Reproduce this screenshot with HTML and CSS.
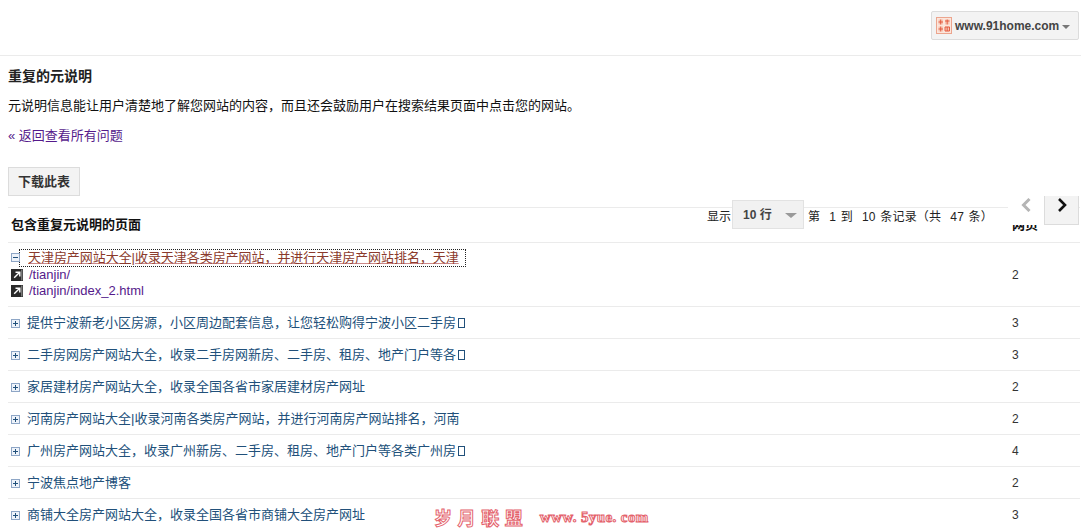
FILE: index.html
```html
<!DOCTYPE html>
<html lang="zh-CN">
<head>
<meta charset="utf-8">
<title>重复的元说明</title>
<link rel="stylesheet" href="styles.css">
</head>
<body>
<header class="topbar">
  <div class="site-picker">
    <svg class="site-icon" width="16" height="17" viewBox="0 0 16 17">
      <rect x="0.5" y="0.5" width="15" height="16" fill="#fbe6dc" stroke="#eca58e"/>
      <path d="M2.5 2.5h4.5v5H2.5zM9 2.5h4.5v5H9zM2.5 9.5h4.5v5H2.5zM9 9.5h4.5v5H9z" fill="#f7c4b2"/>
      <path d="M4.7 2.5v5M2.5 5h4.5M11.2 2.5v5M9 4h4.5M2.5 12h4.5M4.7 9.5v5M9 10h4.5v4H9zM11.2 10v4" fill="none" stroke="#e2553a" stroke-width="0.9"/>
    </svg>
    <span class="site-name">www.91home.com</span>
    <span class="caret"></span>
  </div>
</header>

<main class="content">
  <h1 class="title">重复的元说明</h1>
  <p class="desc">元说明信息能让用户清楚地了解您网站的内容，而且还会鼓励用户在搜索结果页面中点击您的网站。</p>
  <p class="back"><a href="#">« 返回查看所有问题</a></p>
  <div class="actions"><button class="btn">下载此表</button></div>
</main>

<section class="table-wrap">
  <div class="pager">
    <span class="pager-label">显示</span>
    <span class="page-size"><b>10 行</b><i class="caret caret-big"></i></span>
    <span class="pager-info">第&nbsp;&nbsp;1 到&nbsp;&nbsp;10 条记录（共&nbsp;&nbsp;47 条）</span>
    <span class="page-buttons">
      <button class="nav nav-prev"><svg width="12" height="14" viewBox="0 0 12 14"><path d="M9.5 1 3.5 7l6 6" fill="none" stroke="#b5b5b5" stroke-width="3"/></svg></button>
      <button class="nav nav-next"><svg width="12" height="14" viewBox="0 0 12 14"><path d="M3 1l6 6-6 6" fill="none" stroke="#111" stroke-width="2.6"/></svg></button>
    </span>
  </div>
  <table class="issues">
    <thead>
      <tr><th class="col-page">包含重复元说明的页面</th><th class="col-count">网页</th></tr>
    </thead>
    <tbody>
      <tr class="open">
        <td>
          <div class="line line-first">
            <span class="toggle minus"></span>
            <a class="row-link focused" href="#">天津房产网站大全|收录天津各类房产网站，并进行天津房产网站排名，天津</a>
          </div>
          <div class="line sub"><svg class="ext" width="12" height="12" viewBox="0 0 12 12"><rect width="12" height="12" fill="#2a2a2a"/><rect x="10" y="0.5" width="1.5" height="11" fill="#777"/><path d="M3.2 8.8 8 4M4.5 3.2h4.3v4.3" stroke="#fff" stroke-width="1.4" fill="none"/></svg><a class="visited" href="#">/tianjin/</a></div>
          <div class="line sub"><svg class="ext" width="12" height="12" viewBox="0 0 12 12"><rect width="12" height="12" fill="#2a2a2a"/><rect x="10" y="0.5" width="1.5" height="11" fill="#777"/><path d="M3.2 8.8 8 4M4.5 3.2h4.3v4.3" stroke="#fff" stroke-width="1.4" fill="none"/></svg><a class="visited" href="#">/tianjin/index_2.html</a></div>
        </td>
        <td class="count">2</td>
      </tr>
      <tr><td><span class="toggle"></span><a class="row-link" href="#">提供宁波新老小区房源，小区周边配套信息，让您轻松购得宁波小区二手房<i class="tofu"></i></a></td><td class="count">3</td></tr>
      <tr><td><span class="toggle"></span><a class="row-link" href="#">二手房网房产网站大全，收录二手房网新房、二手房、租房、地产门户等各<i class="tofu"></i></a></td><td class="count">3</td></tr>
      <tr><td><span class="toggle"></span><a class="row-link" href="#">家居建材房产网站大全，收录全国各省市家居建材房产网址</a></td><td class="count">2</td></tr>
      <tr><td><span class="toggle"></span><a class="row-link" href="#">河南房产网站大全|收录河南各类房产网站，并进行河南房产网站排名，河南</a></td><td class="count">2</td></tr>
      <tr><td><span class="toggle"></span><a class="row-link" href="#">广州房产网站大全，收录广州新房、二手房、租房、地产门户等各类广州房<i class="tofu"></i></a></td><td class="count">4</td></tr>
      <tr><td><span class="toggle"></span><a class="row-link" href="#">宁波焦点地产博客</a></td><td class="count">2</td></tr>
      <tr><td><span class="toggle"></span><a class="row-link" href="#">商铺大全房产网站大全，收录全国各省市商铺大全房产网址</a></td><td class="count">3</td></tr>
    </tbody>
  </table>
</section>

<div class="watermark"><span class="wm-cn">岁 月 联 盟</span><span class="wm-en">www. 5yue. com</span></div>
</body>
</html>
```

FILE: styles.css
```css
* { box-sizing: border-box; }
html, body { margin: 0; padding: 0; }
body {
  position: relative;
  height: 528px;
  overflow: hidden;
  background: #fff;
  color: #000;
  font: 13px/16px "Liberation Sans", "Noto Sans CJK SC", sans-serif;
}
a { text-decoration: none; }

.topbar {
  height: 56px;
  display: flex;
  justify-content: flex-end;
  align-items: flex-start;
  padding: 11px 2px 0 0;
  border-bottom: 1px solid #ebebeb;
}
.site-picker {
  width: 148px;
  height: 29px;
  display: flex;
  align-items: center;
  padding-left: 4px;
  background: #f3f3f3;
  border: 1px solid #dcdcdc;
  border-radius: 2px;
}
.site-icon { flex: none; margin-right: 3px; }
.site-name { font-size: 12px; font-weight: bold; color: #444; white-space: nowrap; }
.caret {
  display: inline-block;
  margin: 2px 0 0 3px;
  border: 4px solid transparent;
  border-top-color: #777;
  border-bottom: 0;
}
.content { padding: 0 8px; }
.title { margin: 11px 0 0; font-size: 14px; line-height: 18px; font-weight: bold; color: #222; }
.desc { margin: 13px 0 0; font-size: 13px; line-height: 16px; color: #111; }
.back { margin: 14px 0 0; line-height: 16px; }
.back a { color: #551a8b; }
.actions { margin-top: 23px; }
.btn {
  width: 72px;
  height: 29px;
  padding: 0;
  background: #f3f3f3;
  border: 1px solid #dcdcdc;
  color: #333;
  font: bold 13px/16px "Liberation Sans", "Noto Sans CJK SC", sans-serif;
}

.table-wrap { position: relative; margin: 11px 1px 0 8px; }
.pager {
  position: absolute;
  top: -11px;
  right: 0;
  left: 699px;
  height: 36px;
  display: flex;
  align-items: flex-start;
  z-index: 2;
  font-size: 12px;
}
.pager-label { margin-top: 13px; color: #222; }
.page-size {
  width: 72px;
  height: 29px;
  margin: 4px 4px 0 1px;
  padding: 0 0 0 10px;
  display: flex;
  align-items: center;
  justify-content: space-between;
  background: #f1f1f1;
  border: 1px solid #e2e2e2;
  color: #444;
}
.page-size b { font-size: 12px; }
.caret-big { margin: 1px 6px 0 0; border-width: 5px 6px 0; border-top-color: #999; }
.pager-info { margin: 13px 0 0 0; color: #222; word-spacing: 1px; letter-spacing: 0.2px; white-space: nowrap; }
.page-buttons { position: absolute; top: 0; right: 1px; display: flex; background: #fff; }
.nav { width: 36px; height: 29px; padding: 0; background: #fff; border: 0; display: flex; align-items: center; justify-content: center; }
.nav-next { width: 35px; background: #f3f3f3; border: 1px solid #dcdcdc; border-top: 0; }
.nav svg { display: block; margin-top: -11px; }

.issues { width: 100%; border-collapse: collapse; table-layout: fixed; }
.issues th, .issues td { padding: 0 0 0 3px; text-align: left; border-bottom: 1px solid #ebebeb; }
.issues thead th { height: 35px; border-top: 1px solid #ebebeb; font-size: 13px; color: #111; }
.col-page { width: 1001px; }
.issues thead .col-count { vertical-align: top; padding-top: 9px; }
.issues tbody tr { height: 32px; }
.issues tbody tr.open { height: 64px; }
.issues td { vertical-align: middle; white-space: nowrap; }
.count { color: #333; font-size: 12px; }
.row-link { color: #21507a; }
.line { display: flex; align-items: center; height: 16px; }
.line-first { height: 17px; align-items: flex-start; }
.line-first .toggle { margin-top: 3px; }
.toggle {
  display: inline-block;
  position: relative;
  width: 9px;
  height: 9px;
  margin: 0 7px 0 0;
  vertical-align: -1px;
  border: 1px solid #8ea6c6;
  background: linear-gradient(#21507a, #21507a) center / 5px 1px no-repeat,
              linear-gradient(#21507a, #21507a) center / 1px 5px no-repeat,
              #eef3fa;
}
.toggle.minus { background: linear-gradient(#21507a, #21507a) center / 5px 1px no-repeat, #eef3fa; margin-right: 0; }
.focused {
  display: inline-block;
  padding: 0 6px 0 8px;
  height: 16px;
  line-height: 15px;
  letter-spacing: -0.05px;
  color: #8b3a2c;
  outline: 1px dotted #222;
  text-decoration: underline;
  text-decoration-color: #c88;
}
.sub .ext { flex: none; margin-right: 6px; }
.visited { color: #551a8b; font-size: 13px; }
.tofu { display: inline-block; width: 7px; height: 10px; margin-left: 2px; border: 1px solid #21507a; vertical-align: -1px; }

.watermark {
  position: absolute;
  left: 434px;
  top: 507px;
  display: flex;
  align-items: center;
  color: #fff;
  -webkit-text-stroke: 1px #e4626c;
  white-space: nowrap;
}
.wm-cn { font: bold 18px/20px "Noto Sans CJK SC", sans-serif; word-spacing: 1.5px; }
.wm-en { margin-left: 17px; font: bold 15px/20px "Liberation Serif", serif; letter-spacing: 0.4px; }
```
